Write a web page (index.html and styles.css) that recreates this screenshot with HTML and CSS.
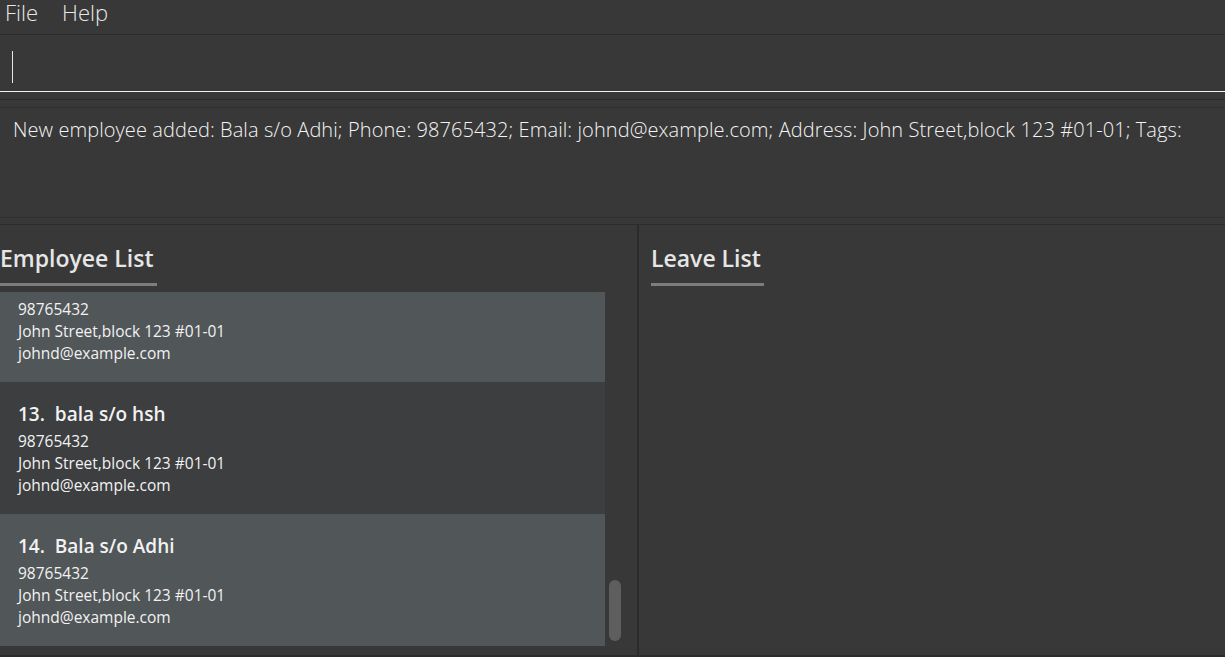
FILE: index.html
```html
<!DOCTYPE html>
<html>
<head>
<meta charset="utf-8">
<link rel="stylesheet" href="styles.css">
</head>
<body>
<div class="app">
  <div class="menubar">
    <span class="menu-item">File</span>
    <span class="menu-item">Help</span>
  </div>
  <div class="command-pane">
    <div class="command-box"><span class="caret"></span></div>
  </div>
  <div class="result-pane">
    <div class="result-box">New employee added: Bala s/o Adhi; Phone: 98765432; Email: johnd@example.com; Address: John Street,block 123 #01-01; Tags: </div>
  </div>
  <div class="lists">
    <div class="pane left-pane">
      <div class="pane-title"><span class="title-text">Employee List</span></div>
      <div class="list-area">
        <div class="list-viewport">
          <div class="list-inner">
            <div class="card even">
              <div class="card-name">12.&nbsp; bala s/o hsh</div>
              <div class="card-line">98765432</div>
              <div class="card-line">John Street,block 123 #01-01</div>
              <div class="card-line">johnd@example.com</div>
            </div>
            <div class="card odd">
              <div class="card-name">13.&nbsp; bala s/o hsh</div>
              <div class="card-line">98765432</div>
              <div class="card-line">John Street,block 123 #01-01</div>
              <div class="card-line">johnd@example.com</div>
            </div>
            <div class="card even">
              <div class="card-name">14.&nbsp; Bala s/o Adhi</div>
              <div class="card-line">98765432</div>
              <div class="card-line">John Street,block 123 #01-01</div>
              <div class="card-line">johnd@example.com</div>
            </div>
          </div>
        </div>
        <div class="scrollbar"><div class="thumb"></div></div>
      </div>
    </div>
    <div class="pane right-pane">
      <div class="pane-title"><span class="title-text">Leave List</span></div>
    </div>
  </div>
</div>
</body>
</html>
```

FILE: styles.css
```css
html, body {
  margin: 0;
  padding: 0;
  width: 1225px;
  height: 657px;
  overflow: hidden;
  background: #383838;
}

.app {
  display: flex;
  flex-direction: column;
  width: 1225px;
  height: 657px;
  background: #383838;
  font-family: "Open Sans", "Noto Sans", sans-serif;
  color: #ffffff;
  border-bottom: 2px solid #2c2c2c;
  box-sizing: border-box;
}

.menubar {
  height: 34px;
  border-bottom: 1px solid #2b2b2b;
  display: flex;
  align-items: flex-start;
  gap: 24px;
  padding-left: 5px;
  flex: none;
}

.menu-item {
  font-size: 22px;
  font-weight: 300;
  color: #e8e8e8;
  line-height: 24px;
}

.command-pane {
  height: 58px;
  flex: none;
}

.command-box {
  height: 57px;
  border-bottom: 1.5px solid #f2f2f2;
  box-sizing: border-box;
  display: flex;
  align-items: flex-start;
  padding-left: 12px;
  padding-top: 16px;
}

.caret {
  width: 1px;
  height: 32px;
  background: #e6e6e6;
}

.result-pane {
  flex: none;
  margin-top: 6px;
  border-top: 1px solid #2c2c2c;
  border-bottom: 1px solid #2c2c2c;
  padding: 7px 0 6px;
}

.result-box {
  height: 111px;
  box-sizing: border-box;
  border-top: 1px solid #2e2e2e;
  border-bottom: 1px solid #2e2e2e;
  padding: 10px 13px;
  font-size: 20px;
  font-weight: 300;
  letter-spacing: 0.08px;
  line-height: 24px;
  color: #f4f4f4;
  white-space: nowrap;
}

.lists {
  flex: 1;
  display: flex;
  min-height: 0;
}

.pane {
  display: flex;
  flex-direction: column;
  min-height: 0;
}

.left-pane {
  width: 637px;
  border-right: 2px solid #2b2b2b;
  flex: none;
}

.right-pane {
  flex: 1;
  padding-left: 12px;
}

.pane-title {
  height: 67px;
  flex: none;
  display: flex;
  align-items: flex-start;
  padding-top: 18px;
  box-sizing: border-box;
}

.title-text {
  font-size: 23px;
  font-weight: 600;
  color: #e6e6e6;
  line-height: 30px;
  border-bottom: 3px solid #7d7d7d;
  padding-bottom: 10px;
  padding-right: 3px;
}

.list-area {
  flex: 1;
  display: flex;
  min-height: 0;
}

.list-viewport {
  width: 605px;
  overflow: hidden;
  height: 354px;
}

.list-inner {
  margin-top: -42px;
}

.card {
  height: 132px;
  box-sizing: border-box;
  padding: 20px 18px 0;
}

.card.even { background: #515658; }
.card.odd { background: #3c3e3f; }

.card-name {
  font-size: 19px;
  font-weight: 600;
  line-height: 24px;
  color: #f2f2f2;
  margin-bottom: 4px;
  white-space: pre;
}

.card-line {
  font-size: 15.5px;
  line-height: 22px;
  color: #f2f2f2;
}

.scrollbar {
  flex: 1;
  position: relative;
}

.thumb {
  position: absolute;
  left: 4px;
  top: 288px;
  width: 12px;
  height: 61px;
  border-radius: 6px;
  background: #5e5e5e;
}
```
